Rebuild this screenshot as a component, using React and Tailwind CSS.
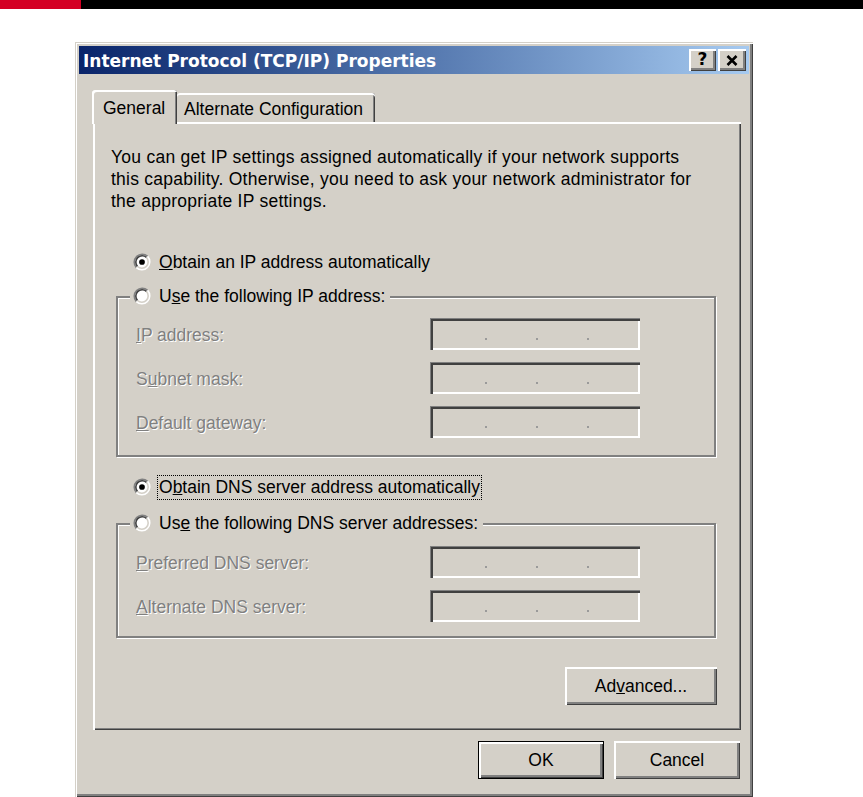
import React from 'react';

// classic win2000 3D edges
const raised = 'shadow-[inset_2px_2px_0_#fff,inset_-1px_-1px_0_#404040,inset_-3px_-3px_0_#808080]';
const sunken = 'shadow-[inset_1px_1px_0_#808080,inset_3px_3px_0_#404040,inset_-2px_-2px_0_#fff]';
const etched = 'border-2 border-[#808080] shadow-[inset_1px_1px_0_#fff,1px_1px_0_#fff]';

const Radio = ({ checked }) => (
  <svg width="18" height="18" viewBox="0 0 17 17" className="shrink-0">
    <circle cx="8.5" cy="8.5" r="7.5" fill="#fff" />
    <path d="M3.2 13.8 A7.5 7.5 0 0 1 13.8 3.2" stroke="#808080" strokeWidth="1.5" fill="none" />
    <path d="M13.8 3.2 A7.5 7.5 0 0 1 3.2 13.8" stroke="#fff" strokeWidth="1.5" fill="none" />
    <path d="M4.26 12.74 A6 6 0 0 1 12.74 4.26" stroke="#404040" strokeWidth="1.5" fill="none" />
    <path d="M12.74 4.26 A6 6 0 0 1 4.26 12.74" stroke="#d4d0c8" strokeWidth="1.5" fill="none" />
    {checked && <circle cx="8.5" cy="8.5" r="2.7" fill="#000" />}
  </svg>
);

const IpField = () => (
  <div className={`w-[210px] h-[32px] bg-[#d4d0c8] ${sunken} flex items-center pl-[55px] gap-[49px] pt-[10px]`}>
    <span className="w-[2px] h-[2px] bg-[#9a9a9a]" />
    <span className="w-[2px] h-[2px] bg-[#9a9a9a]" />
    <span className="w-[2px] h-[2px] bg-[#9a9a9a]" />
  </div>
);

const FieldRow = ({ pre, key_, post }) => (
  <div className="flex items-center h-[32px]">
    <div className="w-[294px] pt-[3px] text-[#808080] [text-shadow:1px_1px_0_#fff]">
      {pre}<u>{key_}</u>{post}
    </div>
    <IpField />
  </div>
);

const Legend = ({ pre, key_, post }) => (
  <div className="-mt-[15px] ml-[12px] pl-[3px] pr-[5px] h-[26px] bg-[#d4d0c8] inline-flex items-center gap-[8px] self-start">
    <Radio />
    <span>{pre}<u>{key_}</u>{post}</span>
  </div>
);

const Button = ({ children, def, className = '' }) => (
  <div className={`h-[38px] flex items-center justify-center bg-[#d4d0c8] ${def ? 'border border-black' : ''} ${raised} ${className}`}>
    {children}
  </div>
);

export default function App() {
  return (
    <div className="min-h-screen bg-white font-['Liberation_Sans',Arial,sans-serif] text-[17.5px] text-black">
      <div className="h-[9px] bg-black flex">
        <div className="w-[81px] bg-[#d40024]" />
      </div>

      <div className="ml-[75px] mt-[33px] w-[678px] h-[755px] bg-[#d4d0c8] p-[4px] shadow-[inset_1px_1px_0_#d4d0c8,inset_2px_2px_0_#fff,inset_-1px_-1px_0_#404040,inset_-3px_-3px_0_#808080]">
        {/* title bar */}
        <div className="h-[28px] flex items-center bg-linear-to-r from-[#0a246a] to-[#a6caf0] pl-[4px] pr-[3px]">
          <span className="font-['DejaVu_Sans',sans-serif] font-bold text-[17px] text-white leading-none pt-[2px]">
            Internet Protocol (TCP/IP) Properties
          </span>
          <div className="ml-auto flex gap-[2px]">
            <div className={`w-[27px] h-[22px] bg-[#d4d0c8] ${raised} flex items-center justify-center font-['DejaVu_Sans',sans-serif] font-bold text-[17px] leading-none pb-[1px]`}>
              ?
            </div>
            <div className={`w-[28px] h-[22px] bg-[#d4d0c8] ${raised} flex items-center justify-center`}>
              <svg width="12" height="11" viewBox="0 0 12 11">
                <path d="M1.5 1 L10.5 10 M10.5 1 L1.5 10" stroke="#000" strokeWidth="2.6" />
              </svg>
            </div>
          </div>
        </div>

        {/* tabs */}
        <div className="mt-[16px] ml-[13px] flex items-end h-[32px]">
          <div className="relative z-10 -mb-[2px] w-[85px] h-[34px] bg-[#d4d0c8] rounded-t-[3px] shadow-[inset_2px_2px_0_#fff,inset_-1px_0_0_#404040,inset_-2px_0_0_#808080] flex items-center pl-[11px] pt-[2px]">
            General
          </div>
          <div className="w-[198px] h-[29px] bg-[#d4d0c8] rounded-t-[3px] shadow-[inset_0_2px_0_#fff,inset_-1px_0_0_#404040,inset_-2px_0_0_#808080] flex items-center pl-[7px] pt-[4px]">
            Alternate Configuration
          </div>
        </div>

        {/* panel */}
        <div className="ml-[14px] w-[648px] h-[608px] shadow-[inset_2px_2px_0_#fff,inset_-1px_-1px_0_#404040,inset_-2px_-2px_0_#808080] flex flex-col">
          <p className="mt-[24px] ml-[18px] leading-[22px] tracking-[0.25px]">
            You can get IP settings assigned automatically if your network supports<br />
            this capability. Otherwise, you need to ask your network administrator for<br />
            the appropriate IP settings.
          </p>

          <div className="mt-[37px] ml-[40px] h-[26px] flex items-center gap-[8px]">
            <Radio checked />
            <span><u>O</u>btain an IP address automatically</span>
          </div>

          <div className={`mt-[21px] ml-[23px] w-[600px] h-[161px] ${etched} flex flex-col`}>
            <Legend pre="U" key_="s" post="e the following IP address:" />
            <div className="mt-[9px] ml-[18px] flex flex-col gap-[12px]">
              <FieldRow pre="" key_="I" post="P address:" />
              <FieldRow pre="S" key_="u" post="bnet mask:" />
              <FieldRow pre="" key_="D" post="efault gateway:" />
            </div>
          </div>

          <div className="mt-[17px] ml-[40px] h-[26px] flex items-center gap-[6px]">
            <Radio checked />
            <span className="border border-dotted border-black px-[1px] leading-[23px]">
              O<u>b</u>tain DNS server address automatically
            </span>
          </div>

          <div className={`mt-[23px] ml-[23px] w-[600px] h-[115px] ${etched} flex flex-col`}>
            <Legend pre="Us" key_="e" post=" the following DNS server addresses:" />
            <div className="mt-[10px] ml-[18px] flex flex-col gap-[12px]">
              <FieldRow pre="" key_="P" post="referred DNS server:" />
              <FieldRow pre="" key_="A" post="lternate DNS server:" />
            </div>
          </div>

          <div className="mt-[29px] ml-[472px]">
            <Button className="w-[152px]">Ad<u>v</u>anced...</Button>
          </div>
        </div>

        {/* dialog buttons */}
        <div className="mt-[11px] ml-[399px] flex gap-[10px]">
          <Button def className="w-[126px]">OK</Button>
          <Button className="w-[126px]">Cancel</Button>
        </div>
      </div>
    </div>
  );
}
